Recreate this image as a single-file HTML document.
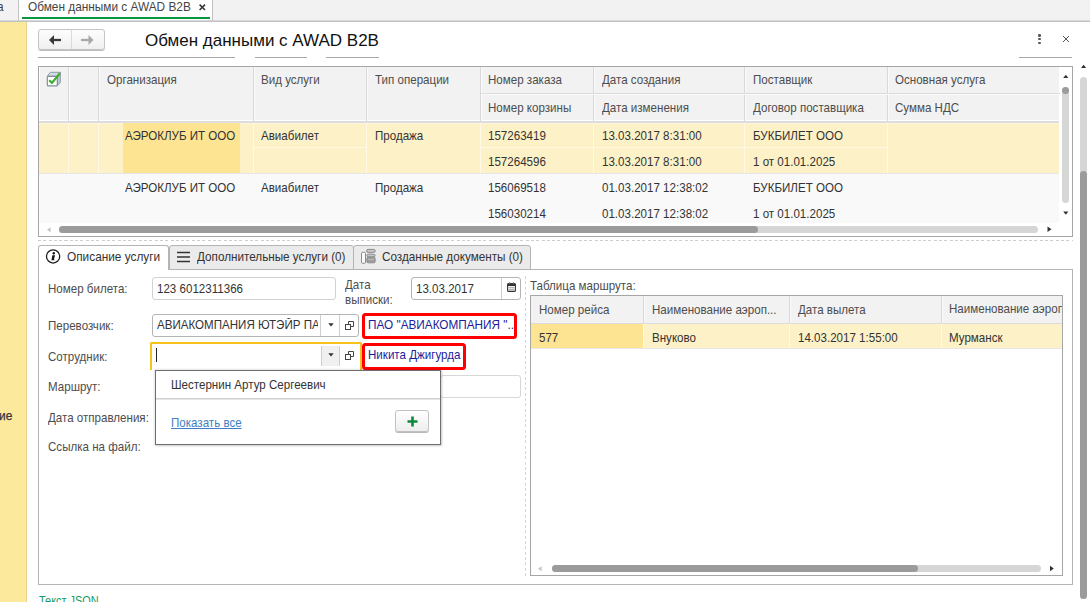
<!DOCTYPE html>
<html><head><meta charset="utf-8">
<style>
html,body{margin:0;padding:0;width:1090px;height:602px;overflow:hidden;background:#fff;}
body{position:relative;font-family:"Liberation Sans",sans-serif;font-size:12.6px;color:#333;}
div,span{box-sizing:border-box;}
.a{position:absolute;}
.t{position:absolute;white-space:nowrap;line-height:14px;font-size:13px;transform:scaleX(0.89);transform-origin:0 0;color:#333;}
</style></head><body>
<div class="a" style="left:0px;top:0px;width:1090px;height:20px;background:#f2f2f2"></div>
<div class="a" style="left:0px;top:20px;width:1090px;height:1px;background:#d8d8dc"></div>
<div class="a" style="left:0px;top:21px;width:1090px;height:1px;background:#c2c2c2"></div>
<div class="a" style="left:18px;top:0px;width:1px;height:21px;background:#c2c2c2"></div>
<div class="a" style="left:19px;top:0px;width:193px;height:20px;background:#fff"></div>
<div class="a" style="left:212px;top:0px;width:1px;height:21px;background:#c2c2c2"></div>
<div class="a" style="left:22px;top:17px;width:188px;height:2px;background:#0a9640"></div>
<span class="t" style="left:-3px;top:0.2999999999999998px;color:#444;font-size:13px;transform:scaleX(0.91)">а</span>
<span class="t" style="left:28px;top:0.2999999999999998px;color:#444;font-size:13px;transform:scaleX(0.91)">Обмен данными с AWAD B2B</span>
<svg class="a" style="left:199px;top:3.5px" width="7" height="7" viewBox="0 0 7 7"><path d="M0.6 0.6L6 6M6 0.6L0.6 6" stroke="#333" stroke-width="1.5"/></svg>
<div class="a" style="left:0px;top:22px;width:26px;height:580px;background:#fce99b"></div>
<div class="a" style="left:26px;top:22px;width:1px;height:580px;background:#e3d38c"></div>
<span class="t" style="left:-1.5px;top:408.9px;color:#3a3040;font-size:13px;transform:scaleX(0.92);-webkit-text-stroke:0.25px #3a3040">ие</span>
<div class="a" style="left:38px;top:29px;width:67px;height:21px;border:1px solid #c4c4c4;border-radius:3px;background:linear-gradient(#fdfdfd,#f0f0f0);box-shadow:0 1px 0 #bdbdbd;"></div>
<div class="a" style="left:71px;top:30px;width:1px;height:19px;background:#d9d9d9"></div>
<svg class="a" style="left:48px;top:34px" width="14" height="12" viewBox="0 0 14 12"><path d="M13 6H5" stroke="#3a3a3a" stroke-width="2.3"/><path d="M1 6L6 1V11Z" fill="#3a3a3a"/></svg>
<svg class="a" style="left:80px;top:34px" width="14" height="12" viewBox="0 0 14 12"><path d="M1 6H9" stroke="#a8a8a8" stroke-width="2.3"/><path d="M13.5 6L8.5 1V11Z" fill="#a8a8a8"/></svg>
<span class="t" style="left:145px;top:33.0px;font-size:17px;transform:none;line-height:20px;top:30.5px;color:#111">Обмен данными с AWAD B2B</span>
<div class="a" style="left:38px;top:57px;width:197px;height:1px;background:#a8a8a8"></div>
<div class="a" style="left:255px;top:57px;width:52px;height:1px;background:#a8a8a8"></div>
<div class="a" style="left:326px;top:57px;width:53px;height:1px;background:#a8a8a8"></div>
<div class="a" style="left:1019px;top:57px;width:53px;height:1px;background:#a8a8a8"></div>
<div class="a" style="left:1037.9px;top:34px;width:2.7px;height:2.7px;border-radius:50%;background:#555;"></div>
<div class="a" style="left:1037.9px;top:37.8px;width:2.7px;height:2.7px;border-radius:50%;background:#555;"></div>
<div class="a" style="left:1037.9px;top:41.6px;width:2.7px;height:2.7px;border-radius:50%;background:#555;"></div>
<svg class="a" style="left:1062px;top:35px" width="8" height="8" viewBox="0 0 8 8"><path d="M1 1L7 7M7 1L1 7" stroke="#555" stroke-width="1"/></svg>
<div class="a" style="left:38px;top:66px;width:1035px;height:171px;border:1px solid #a6a6a6;background:#fff"></div>
<div class="a" style="left:39px;top:67px;width:1020px;height:55px;background:#fff"></div>
<div class="a" style="left:40px;top:67px;width:1019px;height:53px;background:#f2f2f2"></div>
<div class="a" style="left:39px;top:121px;width:1020px;height:2px;background:#dcdde0"></div>
<div class="a" style="left:68px;top:67px;width:1px;height:54px;background:#d8d8d8"></div>
<div class="a" style="left:69px;top:67px;width:1px;height:54px;background:#fafafa"></div>
<div class="a" style="left:98px;top:67px;width:1px;height:54px;background:#d8d8d8"></div>
<div class="a" style="left:99px;top:67px;width:1px;height:54px;background:#fafafa"></div>
<div class="a" style="left:253px;top:67px;width:1px;height:54px;background:#d8d8d8"></div>
<div class="a" style="left:254px;top:67px;width:1px;height:54px;background:#fafafa"></div>
<div class="a" style="left:366px;top:67px;width:1px;height:54px;background:#d8d8d8"></div>
<div class="a" style="left:367px;top:67px;width:1px;height:54px;background:#fafafa"></div>
<div class="a" style="left:480px;top:67px;width:1px;height:54px;background:#d8d8d8"></div>
<div class="a" style="left:481px;top:67px;width:1px;height:54px;background:#fafafa"></div>
<div class="a" style="left:593px;top:67px;width:1px;height:54px;background:#d8d8d8"></div>
<div class="a" style="left:594px;top:67px;width:1px;height:54px;background:#fafafa"></div>
<div class="a" style="left:744px;top:67px;width:1px;height:54px;background:#d8d8d8"></div>
<div class="a" style="left:745px;top:67px;width:1px;height:54px;background:#fafafa"></div>
<div class="a" style="left:887px;top:67px;width:1px;height:54px;background:#d8d8d8"></div>
<div class="a" style="left:888px;top:67px;width:1px;height:54px;background:#fafafa"></div>
<div class="a" style="left:481px;top:93px;width:579px;height:1px;background:#dcdcdc"></div>
<div class="a" style="left:481px;top:94px;width:579px;height:1px;background:#fafafa"></div>
<div class="a" style="left:39px;top:123px;width:1020px;height:50px;background:#fdf1c7"></div>
<div class="a" style="left:39px;top:123px;width:1020px;height:1px;background:#fff6d8"></div>
<div class="a" style="left:123px;top:123px;width:117px;height:50px;background:#fce493"></div>
<div class="a" style="left:68px;top:123px;width:1px;height:50px;background:#fff9e6"></div>
<div class="a" style="left:98px;top:123px;width:1px;height:50px;background:#fff9e6"></div>
<div class="a" style="left:253px;top:123px;width:1px;height:50px;background:#fff9e6"></div>
<div class="a" style="left:366px;top:123px;width:1px;height:50px;background:#fff9e6"></div>
<div class="a" style="left:480px;top:123px;width:1px;height:50px;background:#fff9e6"></div>
<div class="a" style="left:593px;top:123px;width:1px;height:50px;background:#fff9e6"></div>
<div class="a" style="left:744px;top:123px;width:1px;height:50px;background:#fff9e6"></div>
<div class="a" style="left:887px;top:123px;width:1px;height:50px;background:#fff9e6"></div>
<div class="a" style="left:254px;top:147px;width:112px;height:1px;background:#fff9e6"></div>
<div class="a" style="left:481px;top:147px;width:406px;height:1px;background:#fff9e6"></div>
<div class="a" style="left:39px;top:173px;width:1020px;height:1px;background:#e6e6e6"></div>
<div class="a" style="left:39px;top:174px;width:1020px;height:49px;background:#f9f9f9"></div>
<svg class="a" style="left:46px;top:226px" width="6" height="8" viewBox="0 0 6 8"><path d="M1 3.7L4.6 1.2V6.2Z" fill="#c4c4c4"/></svg>
<div class="a" style="left:59px;top:226px;width:979px;height:7px;border-radius:3.5px;background:#d6d6d6"></div>
<div class="a" style="left:59px;top:226px;width:699px;height:7px;border-radius:3.5px;background:#9b9b9b"></div>
<svg class="a" style="left:1047px;top:225px" width="6" height="9" viewBox="0 0 6 9"><path d="M4.5 4.3L0.5 1.5V7.1Z" fill="#333"/></svg>
<svg class="a" style="left:1062px;top:73px" width="8" height="6" viewBox="0 0 8 6"><path d="M3.8 1.8L6.4 5H1.2Z" fill="#333"/></svg>
<div class="a" style="left:1062px;top:87px;width:7px;height:116px;border-radius:3.5px;background:#d6d6d6"></div>
<div class="a" style="left:1062px;top:87px;width:7px;height:7px;border-radius:50%;background:#9b9b9b;"></div>
<svg class="a" style="left:1062px;top:210px" width="8" height="6" viewBox="0 0 8 6"><path d="M3.8 4.8L6.4 1.5H1.2Z" fill="#333"/></svg>
<svg class="a" style="left:44px;top:69px" width="20" height="20" viewBox="0 0 20 20">
<path d="M3.3 7.3L6.3 3.3H16.3L13.3 7.3Z" fill="#d5dce3" stroke="#8a99a8" stroke-width="1"/>
<path d="M13.3 7.3L16.3 3.3V13.3L13.3 16.8Z" fill="#bcc7d0" stroke="#8a99a8" stroke-width="1"/>
<rect x="3.3" y="7.3" width="10" height="9.6" rx="1" fill="#fff" stroke="#7f8fa0" stroke-width="1.2"/>
<path d="M5.2 11.2L7.9 13.9L15.8 4.6" stroke="#3fae2c" stroke-width="2.3" fill="none"/>
</svg>
<span class="t" style="left:106.5px;top:73.0px;color:#4d4d4d">Организация</span>
<span class="t" style="left:261px;top:73.0px;color:#4d4d4d">Вид услуги</span>
<span class="t" style="left:375px;top:73.0px;color:#4d4d4d">Тип операции</span>
<span class="t" style="left:488px;top:73.0px;color:#4d4d4d">Номер заказа</span>
<span class="t" style="left:488px;top:101.0px;color:#4d4d4d">Номер корзины</span>
<span class="t" style="left:601.5px;top:73.0px;color:#4d4d4d">Дата создания</span>
<span class="t" style="left:601.5px;top:101.0px;color:#4d4d4d">Дата изменения</span>
<span class="t" style="left:752.5px;top:73.0px;color:#4d4d4d">Поставщик</span>
<span class="t" style="left:752.5px;top:101.0px;color:#4d4d4d">Договор поставщика</span>
<span class="t" style="left:895px;top:73.0px;color:#4d4d4d">Основная услуга</span>
<span class="t" style="left:895px;top:101.0px;color:#4d4d4d">Сумма НДС</span>
<span class="t" style="left:125px;top:128.5px;">АЭРОКЛУБ ИТ ООО</span>
<span class="t" style="left:261px;top:128.5px;">Авиабилет</span>
<span class="t" style="left:375px;top:128.5px;">Продажа</span>
<span class="t" style="left:488px;top:128.5px;">157263419</span>
<span class="t" style="left:601.5px;top:128.5px;">13.03.2017 8:31:00</span>
<span class="t" style="left:752.5px;top:128.5px;">БУКБИЛЕТ ООО</span>
<span class="t" style="left:125px;top:180.5px;">АЭРОКЛУБ ИТ ООО</span>
<span class="t" style="left:261px;top:180.5px;">Авиабилет</span>
<span class="t" style="left:375px;top:180.5px;">Продажа</span>
<span class="t" style="left:488px;top:180.5px;">156069518</span>
<span class="t" style="left:601.5px;top:180.5px;">01.03.2017 12:38:02</span>
<span class="t" style="left:752.5px;top:180.5px;">БУКБИЛЕТ ООО</span>
<span class="t" style="left:488px;top:154.5px;">157264596</span>
<span class="t" style="left:601.5px;top:154.5px;">13.03.2017 8:31:00</span>
<span class="t" style="left:752.5px;top:154.5px;">1 от 01.01.2025</span>
<span class="t" style="left:488px;top:206.5px;">156030214</span>
<span class="t" style="left:601.5px;top:206.5px;">01.03.2017 12:38:02</span>
<span class="t" style="left:752.5px;top:206.5px;">1 от 01.01.2025</span>
<div class="a" style="left:38px;top:240px;width:1035px;height:1px;background:repeating-linear-gradient(90deg,#cdcdcd 0 3px,transparent 3px 5.3px);"></div>
<div class="a" style="left:38px;top:269px;width:1035px;height:316px;border:1px solid #b4b4b4;background:#fff"></div>
<div class="a" style="left:169px;top:245px;width:185px;height:25px;border:1px solid #b4b4b4;border-radius:3px 3px 0 0;background:#ebebeb;"></div>
<div class="a" style="left:353px;top:245px;width:178px;height:25px;border:1px solid #b4b4b4;border-radius:3px 3px 0 0;background:#ebebeb;"></div>
<div class="a" style="left:38px;top:245px;width:131px;height:25px;border:1px solid #b4b4b4;border-bottom:none;border-radius:3px 3px 0 0;background:#fff;"></div>
<svg class="a" style="left:45px;top:249px" width="16" height="16" viewBox="0 0 16 16">
<circle cx="8.1" cy="7.4" r="6.6" fill="#fff" stroke="#1a1a1a" stroke-width="1.25"/>
<circle cx="8.8" cy="4.2" r="1.2" fill="#111"/>
<path d="M7.4 6.3H10.1L8.8 10.5H9.7L9.3 11.3H6.3L6.6 10.5Z" fill="#111"/>
</svg>
<span class="t" style="left:67px;top:250.2px;color:#333;font-size:13px;transform:scaleX(0.91)">Описание услуги</span>
<svg class="a" style="left:177px;top:251px" width="13" height="12" viewBox="0 0 13 12"><path d="M0 1.5H13M0 6H13M0 10.5H13" stroke="#333" stroke-width="1.4"/></svg>
<span class="t" style="left:197px;top:250.2px;color:#333;font-size:13px;transform:scaleX(0.9)">Дополнительные услуги (0)</span>
<svg class="a" style="left:356px;top:246px" width="26" height="20" viewBox="0 0 26 20">
<rect x="5.5" y="6.3" width="4" height="11" rx="1.2" fill="#fafafa" stroke="#8a8a8a" stroke-width="1"/>
<rect x="10.6" y="3.4" width="8.6" height="3" rx="1.5" fill="#c8c8c8" stroke="#8a8a8a" stroke-width="1"/>
<rect x="10.9" y="8.2" width="8.2" height="2.6" rx="1.3" fill="#c8c8c8" stroke="#8a8a8a" stroke-width="1"/>
<rect x="10.9" y="11.2" width="8.2" height="5.6" rx="1.3" fill="#9e9e9e" stroke="#8a8a8a" stroke-width="1"/>
<path d="M12 13.5H18" stroke="#c0c0c0" stroke-width="0.8"/>
</svg>
<span class="t" style="left:382px;top:250.2px;color:#333;font-size:13px;transform:scaleX(0.9)">Созданные документы (0)</span>
<span class="t" style="left:47.5px;top:281.5px;color:#4d4d4d">Номер билета:</span>
<div class="a" style="left:152px;top:277px;width:184px;height:23px;border:1px solid #d2d2d2;border-radius:3px;background:#fff"></div>
<span class="t" style="left:156.5px;top:281.5px;">123 6012311366</span>
<span class="t" style="left:344.5px;top:278.0px;color:#4d4d4d">Дата</span>
<span class="t" style="left:344.5px;top:292.5px;color:#4d4d4d">выписки:</span>
<div class="a" style="left:411px;top:277px;width:110px;height:23px;border:1px solid #b4b4b4;border-radius:3px;background:#fff"></div>
<div class="a" style="left:501px;top:278px;width:1px;height:21px;background:#cfcfcf"></div>
<span class="t" style="left:415.5px;top:281.5px;">13.03.2017</span>
<svg class="a" style="left:506.5px;top:282px" width="9" height="10" viewBox="0 0 9 10">
<rect x="0.6" y="1.6" width="7.8" height="7.8" rx="1" fill="#fafafa" stroke="#333" stroke-width="1.1"/>
<rect x="0.6" y="1.6" width="7.8" height="2.4" fill="#333"/>
<path d="M1.5 5.6H7.5M1.5 7.5H7.5" stroke="#999" stroke-width="0.8"/>
<path d="M3.3 4.5V8.8M5.7 4.5V8.8" stroke="#bbb" stroke-width="0.6"/>
<rect x="2" y="0.3" width="1.2" height="1.8" fill="#777"/><rect x="5.8" y="0.3" width="1.2" height="1.8" fill="#777"/>
</svg>
<span class="t" style="left:47.5px;top:319.0px;color:#4d4d4d">Перевозчик:</span>
<div class="a" style="left:152px;top:314px;width:207px;height:23px;border:1px solid #b4b4b4;border-radius:3px;background:#fff"></div>
<div class="a" style="left:156px;top:318px;width:162px;height:16px;overflow:hidden;"><span class="t" style="left:0.5px;top:0px">АВИАКОМПАНИЯ ЮТЭЙР ПАССАЖИРСКИЕ</span></div>
<div class="a" style="left:320px;top:315px;width:1px;height:21px;background:#cfcfcf"></div>
<div class="a" style="left:339px;top:315px;width:1px;height:21px;background:#cfcfcf"></div>
<svg class="a" style="left:327.5px;top:323px" width="6" height="4" viewBox="0 0 6 4"><path d="M0.3 0.3H5.7L3 3.4Z" fill="#333"/></svg>
<svg class="a" style="left:345px;top:320.5px" width="10" height="10" viewBox="0 0 10 10"><path d="M3.5 3.5V0.5H8.5V5.5H5.5" fill="none" stroke="#444" stroke-width="1"/><rect x="0.5" y="3.5" width="5" height="5" fill="none" stroke="#444" stroke-width="1"/></svg>
<span class="t" style="left:367.5px;top:318.0px;color:#1c1c9c;transform:scaleX(0.905)">ПАО "АВИАКОМПАНИЯ "...</span>
<div class="a" style="left:362px;top:313px;width:155px;height:26px;border:3.5px solid #f00;border-radius:3.5px"></div>
<span class="t" style="left:47.5px;top:349.5px;color:#4d4d4d">Сотрудник:</span>
<div class="a" style="left:150px;top:342px;width:212px;height:28px;border:2px solid #f8c21c;border-bottom:none;border-radius:2px 2px 0 0;background:#fff"></div>
<div class="a" style="left:321px;top:346px;width:19px;height:20px;background:#f0f0f0;border-left:1px solid #cfcfcf;border-right:1px solid #cfcfcf"></div>
<svg class="a" style="left:327.5px;top:353px" width="6" height="4" viewBox="0 0 6 4"><path d="M0.3 0.3H5.7L3 3.4Z" fill="#333"/></svg>
<svg class="a" style="left:345px;top:350.5px" width="10" height="10" viewBox="0 0 10 10"><path d="M3.5 3.5V0.5H8.5V5.5H5.5" fill="none" stroke="#444" stroke-width="1"/><rect x="0.5" y="3.5" width="5" height="5" fill="none" stroke="#444" stroke-width="1"/></svg>
<div class="a" style="left:156px;top:348px;width:1px;height:14px;background:#222"></div>
<span class="t" style="left:367.5px;top:348.0px;color:#1c1c9c">Никита Джигурда</span>
<div class="a" style="left:362px;top:343px;width:104px;height:27px;border:3.5px solid #f00;border-radius:3.5px"></div>
<span class="t" style="left:47.5px;top:380.0px;color:#4d4d4d">Маршрут:</span>
<div class="a" style="left:440px;top:375px;width:81px;height:23px;border:1px solid #d8d8d8;border-radius:3px;background:#fff"></div>
<span class="t" style="left:47.5px;top:410.5px;color:#4d4d4d">Дата отправления:</span>
<span class="t" style="left:47.5px;top:439.5px;color:#4d4d4d">Ссылка на файл:</span>
<div class="a" style="left:155px;top:370px;width:286px;height:75px;border:1px solid #6e6e6e;border-left-width:1.5px;border-bottom-width:1.5px;background:#fff;box-shadow:0 0 2px 1px rgba(0,0,0,0.10),1px 1px 2px rgba(0,0,0,0.12);"></div>
<div class="a" style="left:156px;top:398px;width:284px;height:1px;background:#d0d0d0"></div>
<div class="a" style="left:156px;top:399px;width:284px;height:1px;background:#e6e6e6"></div>
<span class="t" style="left:170.5px;top:377.5px;color:#333">Шестернин Артур Сергеевич</span>
<span class="t" style="left:170.5px;top:416.0px;color:#3f7fc3;text-decoration:underline">Показать все</span>
<div class="a" style="left:395px;top:410px;width:34px;height:22px;border:1px solid #c0c0c0;border-radius:3px;background:linear-gradient(#fff,#eee);box-shadow:0 1px 0 #b8b8b8;"></div>
<svg class="a" style="left:406.5px;top:416px" width="11" height="11" viewBox="0 0 11 11"><path d="M5.5 0.5V10.5M0.5 5.5H10.5" stroke="#0b8a3a" stroke-width="2.6"/></svg>
<div class="a" style="left:525px;top:276px;width:1px;height:300px;background:repeating-linear-gradient(180deg,#d6d6d6 0 3px,transparent 3px 5.3px);"></div>
<span class="t" style="left:529.8px;top:278.5px;color:#4d4d4d">Таблица маршрута:</span>
<div class="a" style="left:530px;top:295px;width:533px;height:281px;border:1px solid #a6a6a6;background:#fff"></div>
<div class="a" style="left:531px;top:296px;width:531px;height:27px;background:#f2f2f2"></div>
<div class="a" style="left:531px;top:323px;width:531px;height:1px;background:#dcdcdc"></div>
<div class="a" style="left:643px;top:296px;width:1px;height:27px;background:#d8d8d8"></div>
<div class="a" style="left:644px;top:296px;width:1px;height:27px;background:#fafafa"></div>
<div class="a" style="left:789px;top:296px;width:1px;height:27px;background:#d8d8d8"></div>
<div class="a" style="left:790px;top:296px;width:1px;height:27px;background:#fafafa"></div>
<div class="a" style="left:941px;top:296px;width:1px;height:27px;background:#d8d8d8"></div>
<div class="a" style="left:942px;top:296px;width:1px;height:27px;background:#fafafa"></div>
<div class="a" style="left:531px;top:324px;width:531px;height:24px;background:#fdf1c7"></div>
<div class="a" style="left:531px;top:324px;width:112px;height:24px;background:#fce493"></div>
<div class="a" style="left:643px;top:324px;width:1px;height:24px;background:#fff9e6"></div>
<div class="a" style="left:789px;top:324px;width:1px;height:24px;background:#fff9e6"></div>
<div class="a" style="left:941px;top:324px;width:1px;height:24px;background:#fff9e6"></div>
<div class="a" style="left:531px;top:348px;width:531px;height:1px;background:#e6e6e6"></div>
<span class="t" style="left:538.5px;top:302.5px;color:#4d4d4d">Номер рейса</span>
<span class="t" style="left:651.5px;top:302.5px;color:#4d4d4d">Наименование аэроп...</span>
<span class="t" style="left:797.5px;top:302.5px;color:#4d4d4d">Дата вылета</span>
<div class="a" style="left:945px;top:296px;width:117px;height:27px;overflow:hidden;"><span class="t" style="left:3.5px;top:6px;color:#4d4d4d">Наименование аэропорта</span></div>
<span class="t" style="left:538.5px;top:330.5px;">577</span>
<span class="t" style="left:651.5px;top:330.5px;">Внуково</span>
<span class="t" style="left:797.5px;top:330.5px;">14.03.2017 1:55:00</span>
<span class="t" style="left:948.5px;top:330.5px;">Мурманск</span>
<svg class="a" style="left:537px;top:565px" width="6" height="8" viewBox="0 0 6 8"><path d="M1 3.7L4.6 1.2V6.2Z" fill="#c4c4c4"/></svg>
<div class="a" style="left:552px;top:565px;width:489px;height:7px;border-radius:3.5px;background:#d6d6d6"></div>
<div class="a" style="left:552px;top:565px;width:366px;height:7px;border-radius:3.5px;background:#9b9b9b"></div>
<svg class="a" style="left:1049px;top:564px" width="6" height="9" viewBox="0 0 6 9"><path d="M4.8 4.5L1 1.8V7.2Z" fill="#333"/></svg>
<svg class="a" style="left:1080px;top:63px" width="8" height="6" viewBox="0 0 8 6"><path d="M3.6 1.8L6.2 5.1H1Z" fill="#333"/></svg>
<div class="a" style="left:1080px;top:77px;width:7px;height:522px;border-radius:3.5px;background:#d6d6d6"></div>
<div class="a" style="left:1080px;top:171px;width:7px;height:428px;border-radius:3.5px;background:#9b9b9b"></div>
<span class="t" style="left:38.5px;top:594.0px;color:#1a9a66;transform:scaleX(0.84)">Текст JSON</span>
</body></html>
